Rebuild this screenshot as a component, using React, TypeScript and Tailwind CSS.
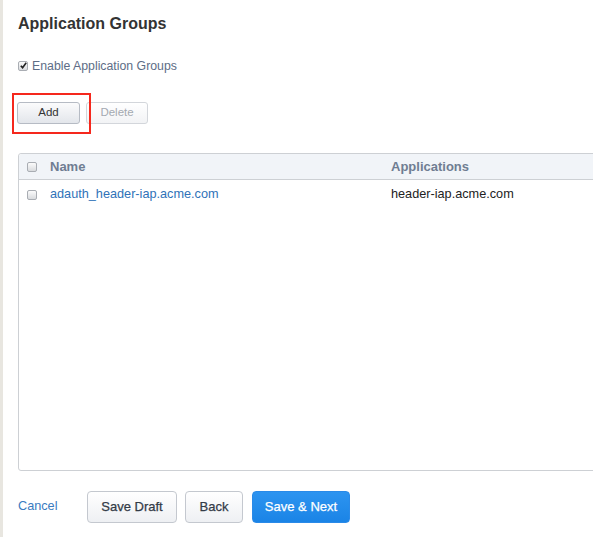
import React from "react";

function Box({ checked = false }: { checked?: boolean }) {
  return (
    <span className="relative inline-block w-[10px] h-[10px] rounded-[2px] border border-[#a9adb3] bg-gradient-to-b from-[#fbfbfb] to-[#d9dbde] shrink-0">
      {checked && (
        <svg viewBox="0 0 10 10" className="absolute left-[0px] top-[-1px] w-[9px] h-[9px]">
          <path d="M2 5.2 L4 7.4 L8 2" fill="none" stroke="#222" strokeWidth="1.8" />
        </svg>
      )}
    </span>
  );
}

export default function App() {
  return (
    <div
      className="w-[593px] h-[537px] flex bg-white overflow-hidden"
      style={{ fontFamily: '"Liberation Sans", Arial, Helvetica, sans-serif' }}
    >
      <div className="w-[3px] h-full bg-[#e8e6e0] shrink-0" />
      <div className="flex-1 flex flex-col pl-[15px] pt-[14px] min-w-0">
        <h1 className="text-[16px] leading-[20px] font-bold text-[#333333]">Application Groups</h1>

        <label className="mt-[24px] flex items-center gap-[4px] h-[16px]">
          <Box checked />
          <span className="text-[12.3px] text-[#5d6d86]">Enable Application Groups</span>
        </label>

        <div className="relative mt-[28px] flex items-center gap-[6px] h-[22px] -ml-[1px]">
          <div className="absolute left-[-5px] top-[-9px] w-[79px] h-[41px] border-2 border-[#f5281d]" />
          <button className="w-[63px] h-[22px] rounded-[3px] border border-[#b6bbc4] bg-gradient-to-b from-[#fbfbfc] to-[#e3e6eb] text-[11.5px] text-[#333]">
            Add
          </button>
          <button className="w-[62px] h-[22px] rounded-[3px] border border-[#d3d6db] bg-gradient-to-b from-[#ffffff] to-[#f2f3f5] text-[11.5px] text-[#a4a9b1]">
            Delete
          </button>
        </div>

        <div className="mt-[29px] w-[620px] h-[318px] border border-[#cdd0d4] rounded-[3px] flex flex-col">
          <div className="h-[26px] bg-[#f1f4f8] border-b border-[#cdd0d4] flex items-center rounded-t-[3px]">
            <div className="w-[31px] flex pl-[8px] pt-[1px]">
              <Box />
            </div>
            <div className="w-[341px] text-[13px] font-bold text-[#6f7d92]">Name</div>
            <div className="text-[13px] font-bold text-[#6f7d92]">Applications</div>
          </div>
          <div className="h-[30px] flex items-center">
            <div className="w-[31px] flex pl-[8px]">
              <Box />
            </div>
            <div className="w-[341px] text-[12.7px] text-[#2f72b8]">adauth_header-iap.acme.com</div>
            <div className="text-[12.7px] text-[#222]">header-iap.acme.com</div>
          </div>
        </div>

        <div className="mt-[20px] flex items-center h-[32px]">
          <a className="text-[12.7px] text-[#3a7bbf] w-[69px]">Cancel</a>
          <button className="w-[90px] h-[32px] rounded-[4px] border border-[#c4c8cf] bg-gradient-to-b from-[#ffffff] to-[#eef0f3] text-[13px] text-[#333b47] [-webkit-text-stroke:0.25px_#333b47]">
            Save Draft
          </button>
          <button className="ml-[8px] w-[58px] h-[32px] rounded-[4px] border border-[#c4c8cf] bg-gradient-to-b from-[#ffffff] to-[#eef0f3] text-[13px] text-[#333b47] [-webkit-text-stroke:0.25px_#333b47]">
            Back
          </button>
          <button className="ml-[9px] w-[98px] h-[32px] rounded-[4px] border border-[#2a8ae8] bg-gradient-to-b from-[#2d94f0] to-[#1a84e6] text-[13px] text-white [-webkit-text-stroke:0.25px_#ffffff]">
            Save &amp; Next
          </button>
        </div>
      </div>
    </div>
  );
}
